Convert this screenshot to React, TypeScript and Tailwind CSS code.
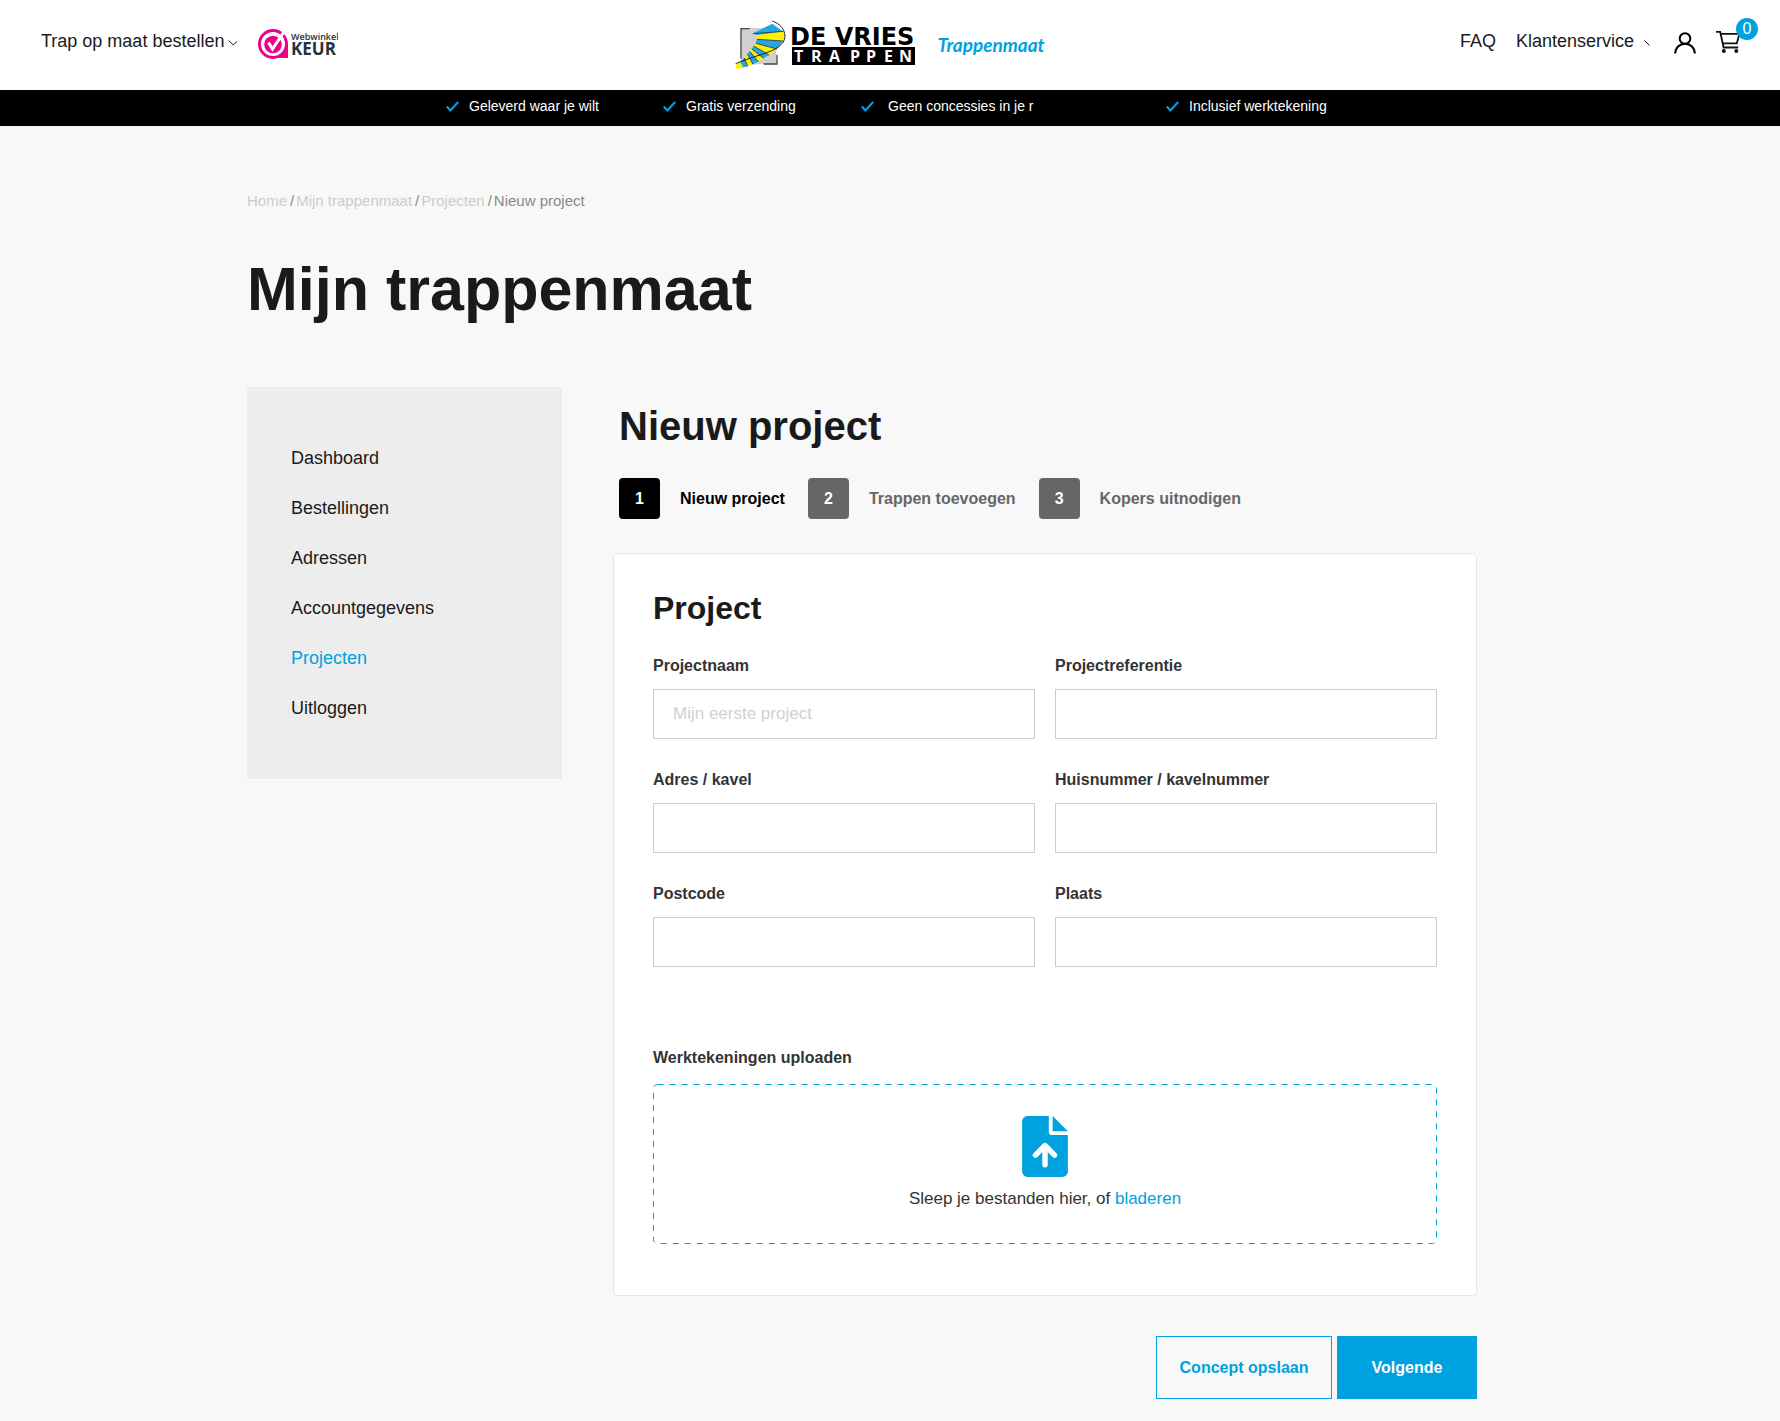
import type { ReactNode } from "react";

const FONT = "font-['Liberation_Sans',Arial,sans-serif]";

function Chevron() {
  return (
    <svg width="10" height="6" viewBox="0 0 10 6" fill="none" stroke="#1a1a1a" aria-hidden="true">
      <path d="M.5.5 5.200 4.800 9 1.600" />
    </svg>
  );
}

function KeurLogo() {
  return (
    <svg width="80" height="32" viewBox="0 0 80 32" role="img" aria-label="Webwinkel Keur">
      <circle cx="15" cy="15" r="15" fill="#ec008c" />
      <path d="M30 14v15H15l10-9Z" fill="#ec008c" />
      <circle cx="15" cy="15" r="12" fill="#fff" />
      <circle cx="15" cy="15.500" r="8.800" fill="#ec008c" />
      <path d="m10.500 13.500 4 6.500L26.500 2" fill="none" stroke="#fff" strokeWidth="3" />
      <text x="33" y="11" fontSize="9" fontWeight="600" fontFamily="Open Sans, sans-serif" fill="#253238">Webwinkel</text>
      <text x="33" y="26" fontSize="17" fontWeight="700" fontFamily="Open Sans, sans-serif" fill="#253238">KEUR</text>
    </svg>
  );
}

function DeVriesLogo() {
  return (
    <svg width="182" height="50" viewBox="0 0 182 50" role="img" aria-label="De Vries Trappen">
      <g transform="translate(-14 -20) scale(.33333)">
        <path d="M60 84h106v108H126l-64 4z" fill="#d0d0d0" />
        <path d="M60 176V86h26M168 165v27h-40" fill="none" stroke="#444" strokeWidth="4" />
        <path d="m96 100 58-29 34 24-80 11z" fill="#22a7e6" />
        <path d="m106 106 82-12 3 12-5 17-80-5z" fill="#fff200" />
        <path d="m108 118 78 5-18 24-64-17z" fill="#22a7e6" />
        <path d="m104 130 64 17-24 18-46-27z" fill="#fff200" />
        <path d="m98 138 46 27-16 10-36-28z" fill="#22a7e6" />
        <path d="m92 147 36 28-16 10-26-31z" fill="#fff200" />
        <path d="m86 154 26 31-16 8-17-31z" fill="#22a7e6" />
        <path d="m79 162 17 31-16 6-10-25z" fill="#fff200" />
        <path d="m70 174 10 25-14 4-9-19z" fill="#22a7e6" />
        <path d="m57 184 9 20-22 2 2-14z" fill="#fff200" />
        <path d="m96 101 92-7M108 118l78 5M104 130l64 17M98 138l46 27M92 147l36 28M86 154l26 31M79 162l17 31M70 174l10 25" fill="none" stroke="#333" strokeWidth="2.500" />
        <path d="M154 63c34 12 46 42 32 64-22 30-64 32-142 64" fill="none" stroke="#222" strokeWidth="3" />
      </g>
      <text x="55" y="25" fontSize="24" fontWeight="700" fontFamily="DejaVu Sans, sans-serif" fill="#000">DE VRIES</text>
      <rect x="57" y="27" width="123" height="18" fill="#000" />
      <text x="59 76 94 115 131 149 164" y="42" fontSize="16" fontWeight="700" fontFamily="Open Sans, sans-serif" fill="#fff">TRAPPEN</text>
    </svg>
  );
}

function UserIcon() {
  return (
    <svg width="22" height="22" viewBox="0 0 22 22" fill="none" stroke="#000" strokeWidth="2" aria-hidden="true">
      <circle cx="11" cy="6.500" r="5.300" />
      <path d="M1.200 21.500a9.800 9.800 0 0 1 19.600 0" />
    </svg>
  );
}

function CartIcon() {
  return (
    <svg width="26" height="24" viewBox="0 0 26 24" fill="none" stroke="#111" strokeWidth="1.800" aria-hidden="true">
      <path d="M0 1.900h4.200L7.600 17.500h14.600M4.600 3.800h18.800l-2.600 9.600H6.800" />
      <circle cx="7.800" cy="21" r="2" fill="#111" stroke="none" />
      <circle cx="20.300" cy="21" r="2" fill="#111" stroke="none" />
    </svg>
  );
}

function Header() {
  return (
    <header className="grid h-[90px] grid-cols-[1fr_auto_1fr] items-center bg-white text-lg text-[#1a1a1a]">
      <div className="flex items-center pl-[41px]">
        <a href="#bestellen" className="mb-2 flex items-center gap-1">
          Trap op maat bestellen <span className="mt-1"><Chevron /></span>
        </a>
        <a href="#keur" className="ml-5"><KeurLogo /></a>
      </div>
      <a href="#home" className="flex items-center gap-5">
        <DeVriesLogo />
        <span className="font-['Lato'] text-[19px] font-bold italic text-[#00a1df]">Trappenmaat</span>
      </a>
      <nav aria-label="Service" className="flex items-center justify-end pr-[22px]">
        <a href="#faq" className="mb-2">FAQ</a>
        <a href="#klantenservice" className="mb-2 ml-5 flex items-center gap-2.5">
          Klantenservice
          <svg width="6" height="6" viewBox="0 0 6 6" stroke="#1a1a1a" aria-hidden="true" className="mt-1">
            <path d="m.5.5 5 5" />
          </svg>
        </a>
        <a href="#account" aria-label="Account" className="mb-1 ml-6"><UserIcon /></a>
        <a href="#winkelwagen" aria-label="Winkelwagen" className="relative mb-1.5 ml-5 pr-4">
          <CartIcon />
          <span className="absolute -top-3 right-0 flex size-[22px] items-center justify-center rounded-full bg-[#00a1df] text-base text-white">
            0
          </span>
        </a>
      </nav>
    </header>
  );
}

function Usp({ children, wide = false }: { children: ReactNode; wide?: boolean }) {
  return (
    <li className={wide ? "flex items-center gap-3.5" : "flex items-center gap-2.5"}>
      <svg width="13" height="11" viewBox="0 0 13 11" fill="none" stroke="#00a1df" strokeWidth="2.200" aria-hidden="true">
        <path d="m.8 5.600 3.600 3.800L12.200 1" />
      </svg>
      {children}
    </li>
  );
}

const crumbs = ["Home", "Mijn trappenmaat", "Projecten"];
const menu = ["Dashboard", "Bestellingen", "Adressen", "Accountgegevens", "Projecten", "Uitloggen"];
const steps = ["Nieuw project", "Trappen toevoegen", "Kopers uitnodigen"];
const fields = [
  { id: "projectnaam", label: "Projectnaam", placeholder: "Mijn eerste project" },
  { id: "projectreferentie", label: "Projectreferentie" },
  { id: "adres", label: "Adres / kavel" },
  { id: "huisnummer", label: "Huisnummer / kavelnummer" },
  { id: "postcode", label: "Postcode" },
  { id: "plaats", label: "Plaats" },
];

function Steps() {
  return (
    <ol className="ml-1.5 mt-7 flex items-center gap-[23px] text-base font-bold">
      {steps.map((step, i) => (
        <li key={step} className={i === 0 ? "flex items-center gap-5 text-black" : "flex items-center gap-5 text-[#666]"}>
          <span
            className={
              i === 0
                ? "flex size-[41px] items-center justify-center rounded bg-black text-white"
                : "flex size-[41px] items-center justify-center rounded bg-[#666] text-white"
            }
          >
            {i + 1}
          </span>
          {step}
        </li>
      ))}
    </ol>
  );
}

function UploadIcon() {
  return (
    <svg width="46" height="61" viewBox="0 0 384 512" aria-hidden="true">
      <path
        fill="#00a1df"
        d="M224 136V0H48C21 0 0 21 0 48v416c0 27 21 48 48 48h288c27 0 48-21 48-48V160H248c-13 0-24-11-24-24Z"
      />
      <path fill="#00a1df" d="M256 0v128h128Z" />
      <path d="M192 410V256M112 328l80-80 80 80" fill="none" stroke="#fff" strokeWidth="46" strokeLinecap="round" strokeLinejoin="round" />
    </svg>
  );
}

function DashedOutline() {
  return (
    <svg className="pointer-events-none absolute inset-0 size-full" aria-hidden="true">
      <rect
        x=".5"
        y=".5"
        rx="4"
        className="h-[calc(100%-1px)] w-[calc(100%-1px)] fill-none stroke-[#00a1df]"
        strokeDasharray="6 6"
      />
    </svg>
  );
}

export default function App() {
  return (
    <div className={`min-h-screen bg-[#f8f8f8] text-[#1a1a1a] ${FONT}`}>
      <Header />
      <div className="bg-black text-sm text-white">
        <ul className="mx-auto grid h-9 max-w-[888px] grid-cols-[217px_198px_305px_1fr] items-center pb-1">
          <Usp>Geleverd waar je wilt</Usp>
          <Usp>Gratis verzending</Usp>
          <Usp wide>Geen concessies in je r</Usp>
          <Usp>Inclusief werktekening</Usp>
        </ul>
      </div>

      <main className="mx-auto max-w-[1286px] pb-[23px] pr-14 pt-[65px]">
        <nav aria-label="Kruimelpad" className="flex gap-0.5 text-[15px] leading-5 text-[#888]">
          {crumbs.map((c) => (
            <span key={c} className="flex gap-[3px]">
              <a href="#pad" className="text-[#ccc]">{c}</a>
              <span>/</span>
            </span>
          ))}
          <span>Nieuw project</span>
        </nav>
        <h1 className="mt-12 text-[61px] font-bold leading-[60px]">Mijn trappenmaat</h1>

        <div className="mt-[68px] flex items-start gap-[51px]">
          <nav aria-label="Account" className="w-[315px] shrink-0 bg-[#ededed] px-11 py-[46px] text-lg">
            <ul>
              {menu.map((m) => (
                <li key={m} className="flex h-[50px] items-center">
                  <a href="#menu" className={m === "Projecten" ? "text-[#00a1df]" : "text-[#1a1a1a]"}>{m}</a>
                </li>
              ))}
            </ul>
          </nav>

          <section className="min-w-0 flex-1 pt-[15px]">
            <h2 className="ml-1.5 text-[40px] font-bold leading-[48px]">Nieuw project</h2>
            <Steps />
            <form>
              <div className="mt-[34px] rounded border border-[#e6e6e6] bg-white px-[39px] pb-[51px] pt-[33px]">
                <h3 className="text-[32px] font-bold leading-[42px]">Project</h3>
                <div className="mt-[25px] grid grid-cols-2 gap-x-5 gap-y-[29px]">
                  {fields.map((f) => (
                    <div key={f.id}>
                      <label htmlFor={f.id} className="block text-base font-bold leading-6 text-[#333]">{f.label}</label>
                      <input
                        id={f.id}
                        type="text"
                        placeholder={f.placeholder}
                        className="mt-[11px] block h-[50px] w-full border border-[#ccc] bg-white px-[19px] text-[17px] placeholder:text-[#d0d0d0]"
                      />
                    </div>
                  ))}
                </div>
                <h4 className="mt-[79px] text-base font-bold leading-6 text-[#333]">Werktekeningen uploaden</h4>
                <div className="relative mt-3.5 flex h-[160px] flex-col items-center pt-8">
                  <DashedOutline />
                  <UploadIcon />
                  <p className="mt-2.5 text-[17px] leading-6 text-[#333]">
                    Sleep je bestanden hier, of <a href="#bladeren" className="text-[#00a1df]">bladeren</a>
                  </p>
                </div>
              </div>
              <div className="mt-10 flex justify-end gap-[5px] text-base font-bold">
                <button type="button" className="h-[63px] w-44 border border-[#00a1df] text-[#00a1df]">Concept opslaan</button>
                <button type="button" className="h-[63px] w-[140px] bg-[#00a1df] text-white">Volgende</button>
              </div>
            </form>
          </section>
        </div>
      </main>
    </div>
  );
}
